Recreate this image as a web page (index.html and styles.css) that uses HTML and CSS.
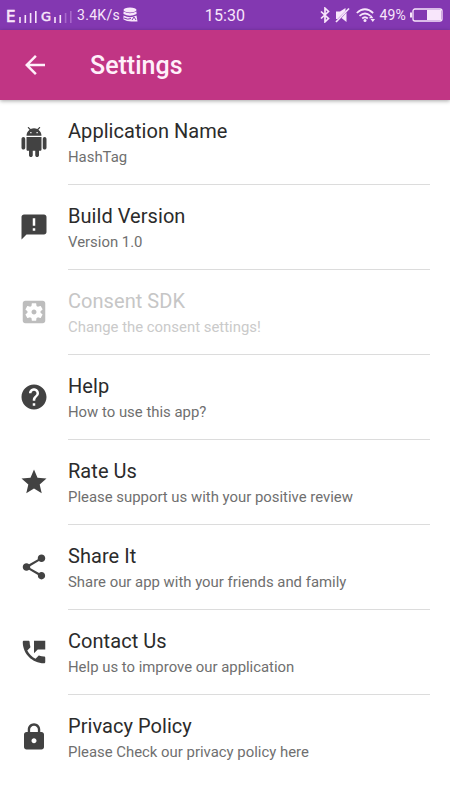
FILE: index.html
```html
<!DOCTYPE html>
<html lang="en">
<head>
<meta charset="utf-8">
<title>Settings</title>
<link rel="stylesheet" href="styles.css">
</head>
<body>
<header class="status">
  <div class="status-left">
    <span class="carrier carrier-e">E</span>
    <svg class="bars" width="18" height="13" viewBox="0 0 18 13"><path d="M1 7v6M6.300 5v8M11.600 3v10M16.800 1v12"/></svg>
    <span class="carrier carrier-g">G</span>
    <svg class="bars" width="18" height="13" viewBox="0 0 18 13"><path d="M1 7v6M6.300 5v8"/><path class="faint" d="M11.600 3v10M16.800 1v12"/></svg>
    <span class="speed">3.4K/s</span>
    <svg class="data" width="15" height="16" viewBox="0 0 15 16"><ellipse cx="7" cy="3" rx="6.500" ry="2.500"/><path d="M.5 4.500q6.500 3.500 13 0v2.500q-6.500 3.500-13 0zM.5 8.500q6.500 3.300 13 0l1 6h-6q-5 0-8-2z"/><path class="cut" d="M1 11q4 2 7 .5M9 13l2-3 2 3"/></svg>
  </div>
  <span class="clock">15:30</span>
  <div class="status-right">
    <svg width="10" height="16" viewBox="0 0 10 16"><path class="line" d="M1 4.500l7.500 7L5 14.800V1.200l3.500 3.300-7.500 7"/></svg>
    <svg class="mute" width="15" height="16" viewBox="0 0 15 16"><path d="M1 4.500h4L10.500 1v3L2.500 12H1zM11.500 5.500V15L6.500 11z"/><path class="line" d="M1 15L14 1.500"/></svg>
    <svg class="wifi" width="20" height="16" viewBox="0 0 20 16"><path class="line" d="M.8 6q8-7.500 16.400 0M3.500 8.900q5.500-4.800 11 0M6.200 11.500q2.800-2.500 5.600 0"/><circle cx="9" cy="13.600" r="1.500"/><path d="M13 11.300l2.200-3 2.200 3zM14.500 12h4.500l-2.200 3z"/></svg>
    <span class="percent">49%</span>
    <svg class="battery" width="33" height="14" viewBox="0 0 33 14"><rect class="shell" x="3" y="1" width="29" height="12" rx="2"/><rect x="17" y="2" width="14" height="10"/><path d="M0 4.500h2v5H0z"/></svg>
  </div>
</header>
<div class="appbar">
  <svg class="back" width="30" height="30" viewBox="0 0 24 24"><path d="M20 11H7.830l5.590-5.590L12 4l-8 8 8 8 1.410-1.410L7.830 13H20v-2z"/></svg>
  <h1>Settings</h1>
</div>
<main>
  <section class="row">
    <svg class="icon" viewBox="0 0 24 24"><path d="M6 18c0 .55.45 1 1 1h1v3.500c0 .83.67 1.500 1.500 1.500s1.500-.67 1.500-1.500V19h2v3.500c0 .83.67 1.500 1.500 1.500s1.500-.67 1.500-1.500V19h1c.55 0 1-.45 1-1V8H6v10zM3.500 8C2.670 8 2 8.670 2 9.500v7c0 .83.67 1.500 1.500 1.500S5 17.330 5 16.500v-7C5 8.670 4.330 8 3.500 8zm17 0c-.83 0-1.500.67-1.500 1.500v7c0 .83.67 1.500 1.500 1.500s1.500-.67 1.500-1.500v-7c0-.83-.67-1.500-1.500-1.500zm-4.970-5.840l1.300-1.300c.2-.2.2-.51 0-.71-.2-.2-.51-.2-.71 0l-1.480 1.480C13.850 1.230 12.950 1 12 1c-.96 0-1.860.23-2.660.63L7.850.15c-.2-.2-.51-.2-.71 0-.2.2-.2.51 0 .71l1.310 1.310C6.970 3.260 6 5.010 6 7h12c0-1.990-.97-3.750-2.470-4.840zM10 5H9V4h1v1zm5 0h-1V4h1v1z"/></svg>
    <div class="text"><h2>Application Name</h2><p>HashTag</p></div>
  </section>
  <section class="row">
    <svg class="icon" viewBox="0 0 24 24"><path d="M20 2H4c-1.100 0-1.990.9-1.990 2L2 22l4-4h14c1.100 0 2-.9 2-2V4c0-1.100-.9-2-2-2zm-7 9h-2V5h2v6zm0 4h-2v-2h2v2z"/></svg>
    <div class="text"><h2>Build Version</h2><p>Version 1.0</p></div>
  </section>
  <section class="row disabled">
    <svg class="icon" viewBox="0 0 24 24"><path d="M12 10c-1.100 0-2 .9-2 2s.9 2 2 2 2-.9 2-2-.9-2-2-2zm7-7H5c-1.110 0-2 .9-2 2v14c0 1.100.89 2 2 2h14c1.110 0 2-.9 2-2V5c0-1.100-.89-2-2-2zm-1.750 9c0 .23-.02.46-.05.68l1.480 1.160c.13.11.17.3.08.45l-1.400 2.420c-.09.15-.27.21-.43.15l-1.740-.7c-.36.28-.76.51-1.180.69l-.26 1.850c-.03.17-.18.3-.35.3h-2.800c-.17 0-.32-.13-.35-.29l-.26-1.850c-.43-.18-.82-.41-1.180-.69l-1.740.7c-.16.06-.34 0-.43-.15l-1.400-2.420c-.09-.15-.05-.34.08-.45l1.480-1.160c-.03-.23-.05-.46-.05-.69 0-.23.02-.46.05-.68l-1.480-1.160c-.13-.11-.17-.3-.08-.45l1.400-2.420c.09-.15.27-.21.43-.15l1.740.7c.36-.28.76-.51 1.180-.69l.26-1.850c.03-.17.18-.3.35-.3h2.800c.17 0 .32.13.35.29l.26 1.850c.43.18.82.41 1.180.69l1.740-.7c.16-.06.34 0 .43.15l1.400 2.420c.09.15.05.34-.08.45l-1.480 1.160c.03.23.05.46.05.69z"/></svg>
    <div class="text"><h2>Consent SDK</h2><p>Change the consent settings!</p></div>
  </section>
  <section class="row">
    <svg class="icon" viewBox="0 0 24 24"><path d="M12 2C6.480 2 2 6.480 2 12s4.480 10 10 10 10-4.480 10-10S17.520 2 12 2zm1 17h-2v-2h2v2zm2.070-7.750l-.9.92C13.450 12.900 13 13.500 13 15h-2v-.5c0-1.100.45-2.100 1.170-2.830l1.240-1.260c.37-.36.59-.86.59-1.410 0-1.100-.9-2-2-2s-2 .9-2 2H8c0-2.210 1.790-4 4-4s4 1.790 4 4c0 .88-.36 1.680-.93 2.250z"/></svg>
    <div class="text"><h2>Help</h2><p>How to use this app?</p></div>
  </section>
  <section class="row">
    <svg class="icon" viewBox="0 0 24 24"><path d="M12 17.270L18.180 21l-1.640-7.030L22 9.240l-7.190-.61L12 2 9.190 8.630 2 9.240l5.460 4.730L5.820 21z"/></svg>
    <div class="text"><h2>Rate Us</h2><p>Please support us with your positive review</p></div>
  </section>
  <section class="row">
    <svg class="icon" viewBox="0 0 24 24"><path d="M18 16.080c-.76 0-1.440.3-1.960.77L8.910 12.700c.05-.23.09-.46.09-.7s-.04-.47-.09-.7l7.050-4.110c.54.5 1.250.81 2.040.81 1.660 0 3-1.340 3-3s-1.340-3-3-3-3 1.340-3 3c0 .24.04.47.09.7L8.040 9.810C7.500 9.310 6.790 9 6 9c-1.660 0-3 1.340-3 3s1.340 3 3 3c.79 0 1.500-.31 2.040-.81l7.120 4.160c-.05.21-.08.43-.08.65 0 1.610 1.310 2.920 2.920 2.920s2.920-1.310 2.920-2.920-1.310-2.920-2.920-2.920z"/></svg>
    <div class="text"><h2>Share It</h2><p>Share our app with your friends and family</p></div>
  </section>
  <section class="row">
    <svg class="icon" viewBox="0 0 24 24"><path d="M20 15.500c-1.250 0-2.450-.2-3.570-.57-.35-.11-.74-.03-1.020.24l-2.200 2.200c-2.830-1.440-5.150-3.750-6.590-6.580l2.200-2.210c.28-.27.36-.66.25-1.010C8.700 6.450 8.500 5.250 8.500 4c0-.55-.45-1-1-1H4c-.55 0-1 .45-1 1 0 9.390 7.610 17 17 17 .55 0 1-.45 1-1v-3.500c0-.55-.45-1-1-1zM12 3v10l3-3h6V3h-9z"/></svg>
    <div class="text"><h2>Contact Us</h2><p>Help us to improve our application</p></div>
  </section>
  <section class="row">
    <svg class="icon" viewBox="0 0 24 24"><path d="M18 8h-1V6c0-2.760-2.240-5-5-5S7 3.240 7 6v2H6c-1.100 0-2 .9-2 2v10c0 1.100.9 2 2 2h12c1.100 0 2-.9 2-2V10c0-1.100-.9-2-2-2zm-6 9c-1.100 0-2-.9-2-2s.9-2 2-2 2 .9 2 2-.9 2-2 2zm3.100-9H8.900V6c0-1.710 1.390-3.100 3.100-3.100s3.100 1.390 3.100 3.100v2z"/></svg>
    <div class="text"><h2>Privacy Policy</h2><p>Please Check our privacy policy here</p></div>
  </section>
</main>
</body>
</html>
```
FILE: styles.css
```css
* { box-sizing: border-box; }
body {
  margin: 0;
  height: 800px;
  overflow: hidden;
  background: #fff;
  font-family: Roboto, sans-serif;
}
h1, h2, p { margin: 0; font-weight: 400; white-space: nowrap; }
svg { display: block; flex: none; }

.status {
  display: grid;
  grid-template-columns: 1fr auto 1fr;
  align-items: center;
  height: 30px;
  padding: 0 7px;
  background: #8338b1;
  color: #f8e6fb;
  fill: #f8e6fb;
}
.status-left, .status-right { display: flex; align-items: center; }
.status-right { justify-content: flex-end; }
.carrier { padding-top: 3px; font-family: "DejaVu Sans", sans-serif; line-height: 16px; }
.carrier-e { width: 12px; margin-left: -1px; font-size: 15px; -webkit-text-stroke: .6px; }
.carrier-g { width: 13px; margin-left: 4px; font-size: 13px; -webkit-text-stroke: .5px; }
.bars { margin-top: 2px; stroke: #f8e6fb; stroke-width: 1.6; }
.carrier-e + .bars { margin-left: 1px; }
.bars .faint { stroke: #a868cb; }
.speed { width: 43px; margin-left: 5px; font-size: 14px; letter-spacing: .3px; }
.data { margin-left: 3px; }
.cut { fill: none; stroke: #8338b1; }
.clock { font-size: 16px; letter-spacing: .1px; }
.line { fill: none; stroke: #f8e6fb; stroke-width: 1.7; }
.mute { margin-left: 5px; }
.wifi { margin-left: 6px; }
.percent { margin-left: 3px; font-size: 14px; letter-spacing: .2px; }
.battery { margin-left: 4px; }
.shell { fill: none; stroke: #f8e6fb; stroke-width: 1.3; }

.appbar {
  display: flex;
  align-items: center;
  height: 70px;
  padding-left: 20px;
  background: #c13584;
  color: #fff0fa;
  fill: #fff0fa;
  box-shadow: 0 1px 4px rgba(0, 0, 0, .35);
}
.appbar h1 { margin-left: 40px; font-size: 25px; font-weight: 500; }

.row {
  display: flex;
  height: 85px;
  padding: 0 20px 0 19px;
  color: #2b2b2b;
  fill: #424242;
}
.icon { width: 30px; height: 30px; margin-top: 26.5px; }
.text {
  flex: 1;
  height: 85px;
  margin-left: 19px;
  padding-top: 18px;
  border-bottom: 1px solid #dcdcdc;
}
.row:last-child .text { border: 0; }
h2 { font-size: 20px; line-height: 26px; letter-spacing: .05px; }
p { margin-top: 3px; font-size: 14.9px; line-height: 20px; color: #6f6f6f; }
.disabled { color: #c6c6c6; fill: #bdbdbd; }
.disabled p { color: #cacaca; }
```
